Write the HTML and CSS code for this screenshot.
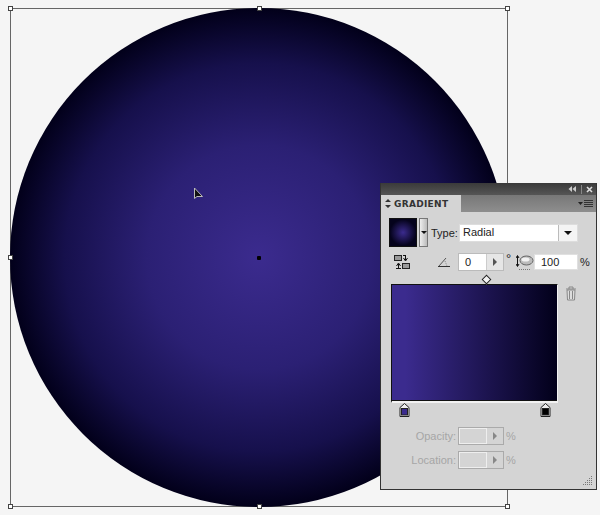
FILE: index.html
```html
<!DOCTYPE html>
<html lang="en">
<head>
  <meta charset="UTF-8" />
  <title>Gradient panel</title>
  <link rel="stylesheet" href="styles.css">
</head>
<body>
  <div class="canvas">
    <div class="bbox">
      <div class="circle"></div>
      <span class="handle h-tl"></span>
      <span class="handle h-tc"></span>
      <span class="handle h-tr"></span>
      <span class="handle h-ml"></span>
      <span class="handle h-bl"></span>
      <span class="handle h-bc"></span>
      <span class="handle h-br"></span>
      <span class="center-dot"></span>
    </div>

    <svg class="cursor" width="11" height="13" viewBox="0 0 11 13">
      <path d="M1.5 1 V11.5 L4 9.5 H9.5 Z" fill="#111" stroke="#bbb" stroke-width="1"/>
    </svg>

    <div class="panel">
      <div class="titlebar">
        <svg width="9" height="7" viewBox="0 0 9 7"><path d="M4 0 V6 L0.5 3 Z M8 0 V6 L4.5 3 Z" fill="#ccc"/></svg>
        <span class="title-sep"></span>
        <svg width="7" height="7" viewBox="0 0 7 7"><path d="M1 1 L6 6 M6 1 L1 6" stroke="#ddd" stroke-width="1.6"/></svg>
      </div>

      <div class="tabs">
        <div class="tab">
          <svg width="6" height="9" viewBox="0 0 6 9"><path d="M3 0 L6 3 H0 Z M3 9 L0 6 H6 Z" fill="#333"/></svg>
          GRADIENT
        </div>
        <div class="tab-rest">
          <svg width="16" height="8" viewBox="0 0 16 8">
            <path d="M0 2 H5 L2.5 5 Z" fill="#222"/>
            <path d="M6 0.5 H15 M6 2.5 H15 M6 4.5 H15 M6 6.5 H15" stroke="#333" stroke-width="1"/>
          </svg>
        </div>
      </div>

      <div class="body">
        <div class="type-row">
          <div class="swatch"></div>
          <div class="swatch-arrow"><span class="arrow-down"></span></div>
          <span class="type-label">Type:</span>
          <div class="select">
            <span class="select-value">Radial</span>
            <span class="select-arrow"><span class="arrow-down"></span></span>
          </div>
        </div>

        <div class="angle-row">
          <svg class="reverse-icon" width="16" height="16" viewBox="0 0 16 16">
            <rect x="0.5" y="1.5" width="7" height="5" fill="#999" stroke="#222"/>
            <path d="M11.5 1 V6 M9.5 4 L11.5 7 L13.5 4 M9 1.5 H12" stroke="#111" fill="none"/>
            <rect x="8.5" y="9.5" width="7" height="5" fill="#999" stroke="#222" />
            <path d="M4.5 15 V10 M2.5 12 L4.5 9 L6.5 12 M2 14.5 H7" stroke="#111" fill="none"/>
          </svg>
          <svg class="angle-icon" width="12" height="10" viewBox="0 0 12 10">
            <path d="M0 9.5 H12" stroke="#333" fill="none"/>
            <path d="M1 9 L8 1" stroke="#555" fill="none"/>
            <path d="M7 4 L9 9" stroke="#888" stroke-dasharray="1 1" fill="none"/>
          </svg>
          <div class="stepper angle-input">
            <span class="stepper-value">0</span>
            <span class="stepper-btn"><span class="arrow-right"></span></span>
          </div>
          <span class="degree">°</span>
          <svg class="aspect-icon" width="18" height="18" viewBox="0 0 18 18">
            <path d="M1.5 1 V11 M0 3 L1.5 0.5 L3 3 M0 9 L1.5 11.5 L3 9" stroke="#111" fill="none"/>
            <ellipse cx="10.5" cy="5.5" rx="6.5" ry="4.5" fill="#bbb" stroke="#666"/>
            <ellipse cx="9.5" cy="4.5" rx="4" ry="2" fill="#f2f2f2"/>
            <path d="M3 14.5 H15" stroke="#777" stroke-dasharray="1 1"/>
          </svg>
          <div class="aspect-input">100</div>
          <span class="percent">%</span>
        </div>

        <div class="diamond-row"><span class="diamond"></span></div>

        <div class="ramp-row">
          <div class="ramp"></div>
          <svg class="trash" width="12" height="15" viewBox="0 0 12 15">
            <path d="M1 3 H11 M4 3 V1 H8 V3" stroke="#888" fill="none"/>
            <path d="M2 4 H10 L9.5 14 H2.5 Z" fill="#ddd" stroke="#888"/>
            <path d="M4.5 5 V13 M7.5 5 V13" stroke="#888"/>
          </svg>
        </div>

        <div class="stops">
          <svg class="stop stop-first" width="11" height="14" viewBox="0 0 11 14">
            <path d="M5.5 0.5 L10 4.5 V13.5 H1 V4.5 Z" fill="#eee" stroke="#222"/>
            <rect x="2.5" y="5.5" width="6" height="6.5" fill="#3b2b8e" stroke="#222"/>
          </svg>
          <svg class="stop stop-last" width="11" height="14" viewBox="0 0 11 14">
            <path d="M5.5 0.5 L10 4.5 V13.5 H1 V4.5 Z" fill="#eee" stroke="#222"/>
            <rect x="2.5" y="5.5" width="6" height="6.5" fill="#000" stroke="#222"/>
          </svg>
        </div>

        <div class="field-row">
          <span class="field-label">Opacity:</span>
          <div class="stepper disabled">
            <span class="stepper-value"></span>
            <span class="stepper-btn"><span class="arrow-right"></span></span>
          </div>
          <span class="field-unit">%</span>
        </div>
        <div class="field-row">
          <span class="field-label">Location:</span>
          <div class="stepper disabled">
            <span class="stepper-value"></span>
            <span class="stepper-btn"><span class="arrow-right"></span></span>
          </div>
          <span class="field-unit">%</span>
        </div>
      </div>

      <svg class="grip" width="10" height="10" viewBox="0 0 10 10" fill="#777">
        <rect x="8" y="0" width="1" height="1"/>
        <rect x="6" y="2" width="1" height="1"/><rect x="8" y="2" width="1" height="1"/>
        <rect x="4" y="4" width="1" height="1"/><rect x="6" y="4" width="1" height="1"/><rect x="8" y="4" width="1" height="1"/>
        <rect x="2" y="6" width="1" height="1"/><rect x="4" y="6" width="1" height="1"/><rect x="6" y="6" width="1" height="1"/><rect x="8" y="6" width="1" height="1"/>
        <rect x="0" y="8" width="1" height="1"/><rect x="2" y="8" width="1" height="1"/><rect x="4" y="8" width="1" height="1"/><rect x="6" y="8" width="1" height="1"/><rect x="8" y="8" width="1" height="1"/>
      </svg>
    </div>
  </div>
</body>
</html>
```

FILE: styles.css
```css
* {
  margin: 0;
  padding: 0;
  box-sizing: border-box;
  font-family: 'Liberation Sans', Arial, sans-serif;
}

body {
  background-color: #f5f5f5;
  overflow: hidden;
}

.canvas {
  position: relative;
  width: 600px;
  height: 515px;
  overflow: hidden;
  background-color: #f5f5f5;
}

/* artwork + selection box */
.bbox {
  position: absolute;
  left: 10px;
  top: 8px;
  width: 498px;
  height: 499px;
  border: 1px solid #666;
}

.circle {
  width: calc(100% + 2px);
  height: calc(100% + 2px);
  margin: -1px;
  border-radius: 50%;
  background: radial-gradient(circle closest-side, #3b2b8e 0%, #2b2074 45%, #16104c 78%, #02001a 100%);
}

.handle {
  position: absolute;
  width: 5px;
  height: 5px;
  background-color: white;
  border: 1px solid #444;
}

.h-tl { left: -3px; top: -3px; }
.h-tc { left: 246px; top: -3px; }
.h-tr { right: -3px; top: -3px; }
.h-ml { left: -3px; top: 246px; }
.h-bl { left: -3px; bottom: -3px; }
.h-bc { left: 246px; bottom: -3px; }
.h-br { right: -3px; bottom: -3px; }

.center-dot {
  position: absolute;
  left: 246px;
  top: 247px;
  width: 4px;
  height: 4px;
  border-radius: 1px;
  background-color: #000;
}

.cursor {
  position: absolute;
  left: 193px;
  top: 187px;
}

/* gradient panel */
.panel {
  position: absolute;
  left: 380px;
  top: 183px;
  width: 217px;
  height: 307px;
  background-color: #d4d4d4;
  border: 1px solid #333;
  border-top: none;
  color: #222;
  font-size: 11px;
}

.titlebar {
  height: 12px;
  background: linear-gradient(#3a3a3a, #555);
  display: flex;
  justify-content: flex-end;
  align-items: center;
  gap: 4px;
  padding-right: 3px;
}

.title-sep {
  width: 1px;
  height: 9px;
  background-color: #888;
}

.tabs {
  height: 17px;
  display: flex;
  background: linear-gradient(#777, #8e8e8e);
}

.tab {
  width: 80px;
  background-color: #d4d4d4;
  display: flex;
  align-items: center;
  gap: 3px;
  padding-left: 4px;
  font-family: 'DejaVu Sans', sans-serif;
  font-size: 9px;
  font-weight: bold;
  letter-spacing: 0.3px;
  color: #333;
}

.tab-rest {
  flex: 1;
  display: flex;
  justify-content: flex-end;
  align-items: center;
  padding-right: 2px;
}

.body {
  padding: 6px 0 0 8px;
}

.type-row {
  display: flex;
  align-items: center;
  height: 29px;
}

.swatch {
  width: 28px;
  height: 29px;
  border: 1px solid #111;
  background: radial-gradient(circle closest-side, #3b2b8e, #05031c);
}

.swatch-arrow {
  width: 9px;
  height: 29px;
  margin-left: 2px;
  border: 1px solid #777;
  background: linear-gradient(90deg, #eee, #bbb);
  display: flex;
  align-items: center;
  justify-content: center;
}

.arrow-down {
  width: 0;
  height: 0;
  border-left: 3px solid transparent;
  border-right: 3px solid transparent;
  border-top: 3px solid #111;
}

.arrow-right {
  width: 0;
  height: 0;
  border-top: 4px solid transparent;
  border-bottom: 4px solid transparent;
  border-left: 4px solid #555;
}

.type-label {
  margin-left: 3px;
  width: 28px;
}

.select {
  width: 119px;
  height: 18px;
  background-color: #f4f4f4;
  border: 1px solid #ddd;
  display: flex;
  align-items: center;
}

.select-value {
  width: 99px;
  height: 100%;
  padding: 1px 0 0 3px;
  background-color: white;
  border-right: 1px solid #bbb;
}

.select-arrow {
  flex: 1;
  display: flex;
  justify-content: center;
}

.select-arrow .arrow-down {
  border-left-width: 4px;
  border-right-width: 4px;
  border-top-width: 4px;
}

.angle-row {
  display: flex;
  align-items: center;
  height: 18px;
  margin-top: 6px;
}

.reverse-icon {
  margin-left: 5px;
}

.angle-icon {
  margin-left: 28px;
}

.angle-input {
  margin-left: 8px;
}

.stepper {
  width: 46px;
  height: 18px;
  display: flex;
  border: 1px solid #bbb;
  background-color: #e6e6e6;
}

.stepper-value {
  width: 28px;
  padding: 2px 0 0 6px;
  background-color: white;
  border-right: 1px solid #ccc;
}

.stepper-btn {
  flex: 1;
  display: flex;
  align-items: center;
  justify-content: center;
}

.degree {
  width: 10px;
  margin: -8px 0 0 2px;
  font-size: 13px;
}

.aspect-icon {
  margin-top: 4px;
  width: 18px;
}

.aspect-input {
  width: 44px;
  height: 16px;
  padding: 1px 0 0 6px;
  background-color: white;
  border: 1px solid #e0e0e0;
}

.percent {
  margin-left: 2px;
}

.diamond-row {
  position: relative;
  height: 13px;
}

.diamond {
  position: absolute;
  left: 94px;
  top: 5px;
  width: 7px;
  height: 7px;
  transform: rotate(45deg);
  background-color: #f4f4f4;
  border: 1px solid #222;
}

.ramp-row {
  display: flex;
  gap: 7px;
}

.ramp {
  width: 167px;
  height: 119px;
  margin-left: 2px;
  border: 1px solid #111;
  border-right-color: #f2f2f2;
  border-bottom: 2px solid #f2f2f2;
  background: linear-gradient(90deg, #3b2b8e 0%, #3b2b8e 8%, #02001a 100%);
  box-shadow: inset 0 -1px 0 #111;
}

.trash {
  margin-top: 2px;
}

.stops {
  position: relative;
  height: 24px;
}

.stop {
  position: absolute;
  top: 0;
}

.stop-first {
  left: 10px;
}

.stop-last {
  left: 151px;
}

.field-row {
  display: flex;
  align-items: center;
  height: 18px;
  margin-bottom: 6px;
  color: #a6a6a6;
}

.field-label {
  width: 67px;
  text-align: right;
  margin-right: 2px;
}

.field-row .stepper {
  background-color: #d4d4d4;
  border-color: #aaa;
}

.field-row .stepper-value {
  background-color: #d4d4d4;
  border: 1px solid #eee;
}

.field-row .arrow-right {
  border-left-color: #888;
}

.field-unit {
  margin-left: 2px;
}

.grip {
  position: absolute;
  right: 3px;
  bottom: 3px;
}
```
